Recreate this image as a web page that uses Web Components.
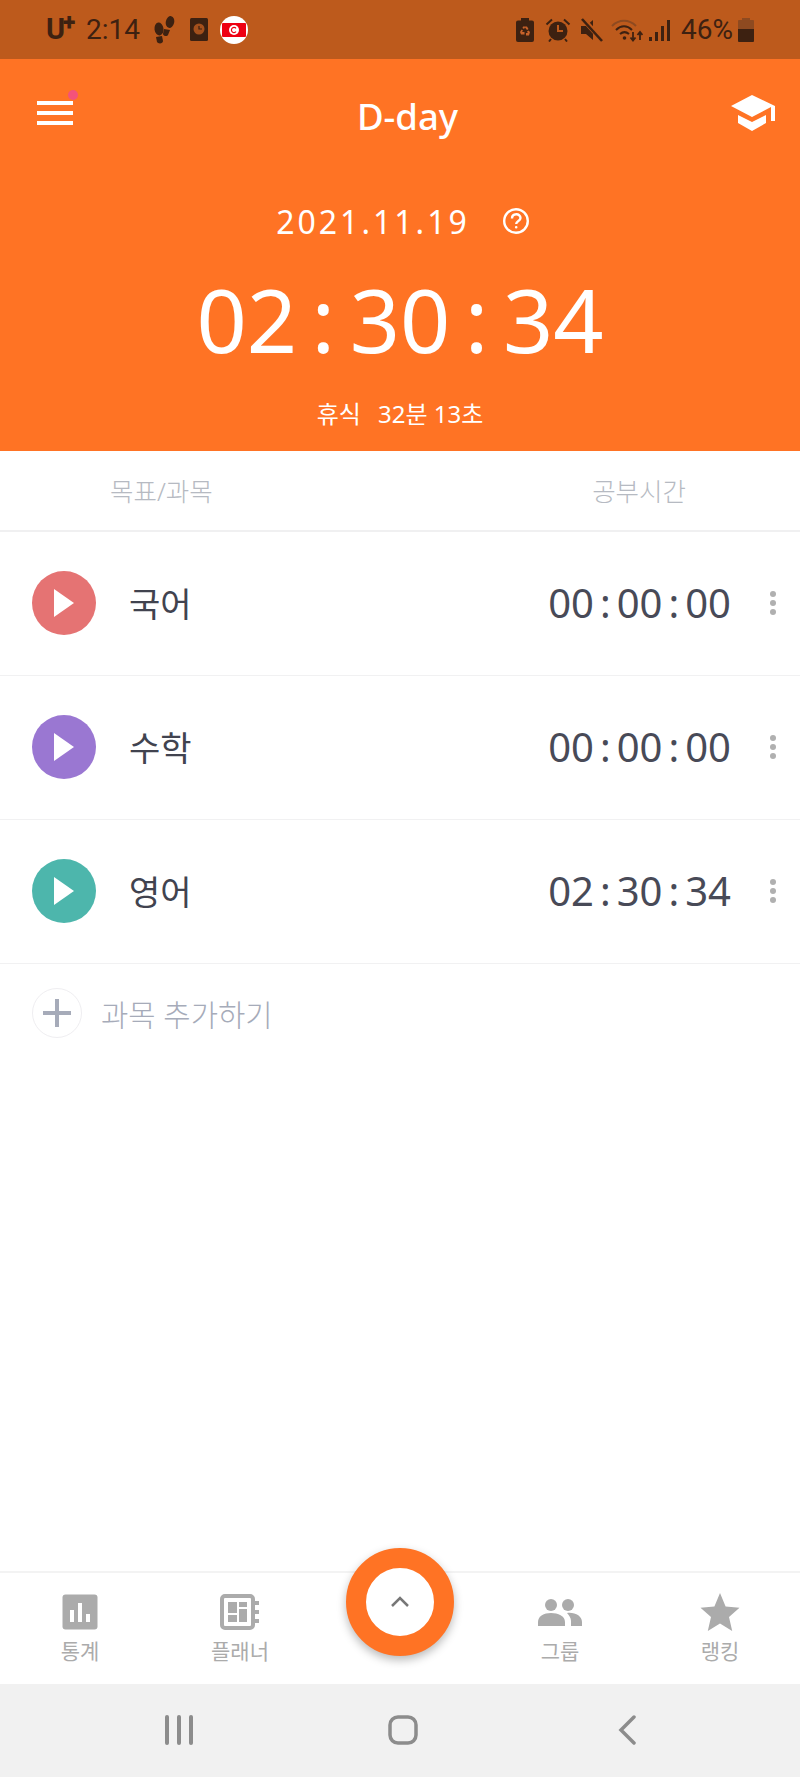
<!DOCTYPE html>
<html>
  <head>
    <meta charset="utf-8" />
    <title>D-day</title>
    <style>
      html, body { margin: 0; padding: 0; background: #fff; }
      body { width: 800px; height: 1777px; display: flex; flex-direction: column; font-family: "Noto Sans", "Noto Sans CJK KR", sans-serif; }
      subject-list { flex: 1; }
      .c { margin: 0 6px; }
    </style>
  </head>
  <body>
    <status-bar></status-bar>
    <timer-header></timer-header>
    <list-head></list-head>
    <subject-list>
      <subject-row color="#e57373">
        <span slot="name">국어</span>
        <span slot="time">00<span class="c">:</span>00<span class="c">:</span>00</span>
      </subject-row>
      <subject-row color="#9a77d2">
        <span slot="name">수학</span>
        <span slot="time">00<span class="c">:</span>00<span class="c">:</span>00</span>
      </subject-row>
      <subject-row color="#4db6ac">
        <span slot="name">영어</span>
        <span slot="time">02<span class="c">:</span>30<span class="c">:</span>34</span>
      </subject-row>
      <add-subject>과목 추가하기</add-subject>
    </subject-list>
    <tab-bar>
      <tab-item label="통계">
        <svg width="36" height="36" viewBox="0 0 36 36"><rect width="35" height="35" x="0.5" y="0.5" rx="3" fill="#ababab"/><rect x="8" y="16" width="4" height="12" fill="#fff"/><rect x="16" y="9" width="4" height="19" fill="#fff"/><rect x="24" y="20" width="4" height="8" fill="#fff"/></svg>
      </tab-item>
      <tab-item label="플래너">
        <svg width="40" height="36" viewBox="0 0 40 36"><rect x="2" y="2" width="31" height="32" rx="3" fill="none" stroke="#ababab" stroke-width="4"/><rect x="8" y="8" width="9" height="11" fill="#ababab"/><rect x="19" y="8" width="8" height="5" fill="#ababab"/><rect x="19" y="15" width="8" height="13" fill="#ababab"/><rect x="8" y="21" width="9" height="7" fill="#ababab"/><rect x="34" y="7" width="5" height="4" fill="#ababab"/><rect x="34" y="16" width="5" height="4" fill="#ababab"/><rect x="34" y="25" width="5" height="4" fill="#ababab"/></svg>
      </tab-item>
      <span></span>
      <tab-item label="그룹">
        <svg width="44" height="36" viewBox="0 0 44 36"><circle cx="13" cy="11" r="6" fill="#ababab"/><circle cx="30" cy="11" r="6" fill="#ababab"/><path d="M0 32v-4c0-6 6-9 13-9s14 3 14 9v4z" fill="#ababab"/><path d="M29 19c8-1 15 3 15 9v4H33v-5c0-3-2-6-4-8z" fill="#ababab"/></svg>
      </tab-item>
      <tab-item label="랭킹">
        <svg width="40" height="38" viewBox="0 0 40 38"><path d="M20 0l5.6 13.6L39.500 14.700 29 24l3.200 14L20 30.500 7.800 38 11 24 .5 14.700l13.900-1.100z" fill="#ababab"/></svg>
      </tab-item>
    </tab-bar>
    <nav-bar></nav-bar>

    <script type="text/javascript">
      // small helper so each element only has to hand over its html
      class ShadowBase extends HTMLElement {
        constructor() {
          super();
          this.attachShadow({ mode: "open" });
          const template = document.createElement("template");
          template.innerHTML = this.markup();
          this.shadowRoot.appendChild(template.content.cloneNode(true));
        }
      }

      class StatusBar extends ShadowBase {
        markup() {
          return `
          <style>
            :host { display: flex; height: 59px; background: #bd5a1c; color: #3d2111; align-items: center; padding: 0 46px; box-sizing: border-box; font-family: Roboto, sans-serif; font-size: 28px; line-height: 59px; }
            svg { display: block; flex: none; }
            .carrier { font-weight: 700; position: relative; font-size: 29px; width: 30px; }
            .carrier b { position: absolute; left: 17px; top: 0; font-size: 23px; line-height: 46px; }
            .clock { margin-left: 10px; }
            .left, .right { display: flex; align-items: center; height: 59px; }
            .right { margin-left: auto; }
          </style>
          <div class="left">
            <span class="carrier">U<b>+</b></span>
            <span class="clock">2:14</span>
            <svg style="margin-left:13px" width="22" height="28" viewBox="0 0 22 28" fill="#3d2111"><ellipse cx="6" cy="13" rx="4.500" ry="6.500" transform="rotate(-8 6 13)"/><path d="M3 21l6-1 1 5c0 3-5 3-6 1z"/><ellipse cx="17" cy="6" rx="4.200" ry="6" transform="rotate(12 17 6)"/><path d="M11 13l6 1-2 5c-1 2-5 1-5-1z"/></svg>
            <svg style="margin-left:15px" width="18" height="23" viewBox="0 0 18 23"><rect width="18" height="23" rx="1.500" fill="#3d2111"/><circle cx="9" cy="11" r="5.500" fill="#a5501c"/><path d="M9 8v3h3" fill="none" stroke="#3d2111" stroke-width="1.200"/></svg>
            <svg style="margin-left:12px" width="28" height="28" viewBox="0 0 28 28"><circle cx="14" cy="14" r="14" fill="#fff"/><rect x="2" y="7" width="24" height="14" rx="1" fill="#ee0012"/><circle cx="14" cy="14" r="5" fill="#fff"/><path d="M16 12.300a2.600 2.600 0 1 0 0 3.400" fill="none" stroke="#ee0012" stroke-width="1.200"/></svg>
          </div>
          <div class="right">
            <svg width="18" height="24" viewBox="0 0 18 24"><path d="M5 0h8v2.500h3a2 2 0 0 1 2 2V22a2 2 0 0 1-2 2H2a2 2 0 0 1-2-2V4.500a2 2 0 0 1 2-2h3z" fill="#3d2111"/><path d="M7 8.500h4l1.500 2.500-1.500 1-2-2.500-1 1.500-1.500-1zM4 14l1.500-2.500 1.500 1-1 1.500h2.500v2.500H5zM14 14l-1.500-1.500-1.500 1 .8 1.500H10v2.500h3z" fill="#c7622a"/></svg>
            <svg style="margin-left:11px" width="26" height="24" viewBox="0 0 26 24"><circle cx="13" cy="13" r="9.500" fill="#3d2111"/><path d="M13 7v6h5" fill="none" stroke="#bd5a1c" stroke-width="2"/><path d="M1.500 6.500L7 1.500M24.500 6.500L19 1.500M6 21l-2 2.500M20 21l2 2.500" stroke="#3d2111" stroke-width="2" fill="none"/></svg>
            <svg style="margin-left:9px" width="24" height="24" viewBox="0 0 24 24"><path d="M1 8h5l7-6v20l-7-6H1z" fill="#3d2111"/><path d="M3 1l19 21" stroke="#bd5a1c" stroke-width="5"/><path d="M2 1l20 22" stroke="#3d2111" stroke-width="2.600"/></svg>
            <svg style="margin-left:7px" width="32" height="24" viewBox="0 0 32 24" fill="none"><path d="M1 8c7-7 17-7 24 0" stroke="#8e4a20" stroke-width="2"/><path d="M5 12c5-5 11-5 16 0" stroke="#3d2111" stroke-width="2"/><path d="M9 16c3-2.500 6-2.500 9 0" stroke="#3d2111" stroke-width="2"/><circle cx="13.500" cy="20" r="1.800" fill="#3d2111"/><path d="M22 14v8M19.500 19.500l2.500 3 2.500-3M29 22v-8M26.500 17l2.500-3 2.500 3" stroke="#3d2111" stroke-width="1.800"/></svg>
            <svg style="margin-left:6px" width="22" height="24" viewBox="0 0 22 24" fill="#3d2111"><rect x="0" y="19" width="3" height="4"/><rect x="6" y="14" width="3" height="9"/><rect x="12" y="8" width="3" height="15"/><rect x="18" y="2" width="3" height="21"/></svg>
            <span style="margin-left:10px">46%</span>
            <svg style="margin-left:5px" width="16" height="24" viewBox="0 0 16 24"><path d="M4 0h8v2h3a1 1 0 0 1 1 1v8H0V3a1 1 0 0 1 1-1h3z" fill="#8e4a20"/><path d="M0 11h16v12a1 1 0 0 1-1 1H1a1 1 0 0 1-1-1z" fill="#3d2111"/></svg>
          </div>
          `;
        }
      }

      class TimerHeader extends ShadowBase {
        markup() {
          return `
          <style>
            :host { display: block; height: 392px; background: #ff7324; color: #fff; box-sizing: border-box; padding: 32px 25px 0 37px; }
            .top { display: grid; grid-template-columns: 1fr auto 1fr; align-items: center; height: 50px; }
            .menu { position: relative; width: 36px; height: 24px; margin-top: -6px; display: flex; flex-direction: column; justify-content: space-between; }
            .menu i { display: block; height: 4px; background: #fff; }
            .menu b { position: absolute; left: 31px; top: -11px; width: 10px; height: 10px; border-radius: 50%; background: #f4527a; }
            .title { font-size: 36.500px; font-weight: 500; line-height: 50px; margin-left: 3px; }
            .cap { justify-self: end; display: block; margin-top: -6px; }
            .hero { margin: 0 -25px 0 -37px; display: flex; flex-direction: column; align-items: center; }
            .date { display: flex; align-items: center; margin-top: 60px; height: 40px; font-size: 32px; letter-spacing: 3px; margin-left: 5px; }
            .date svg { margin-left: 33px; }
            .clock { margin-top: 18px; height: 120px; line-height: 120px; font-size: 88px; }
            .clock span { margin: 0 14.500px; }
            .rest { margin-top: 17px; font-size: 24px; line-height: 36px; }
            .rest em { font-style: normal; margin-right: 11px; }
          </style>
          <div class="top">
            <div class="menu"><i></i><i></i><i></i><b></b></div>
            <div class="title">D-day</div>
            <svg class="cap" width="44" height="36" viewBox="0 0 44 36" fill="#fff"><path d="M21 0L0 11l21 11 19-10v14h4V11z"/><path d="M7 20v8l14 8 14-8v-8l-14 7z"/></svg>
          </div>
          <div class="hero">
            <div class="date">2021.11.19<svg width="26" height="26" viewBox="0 0 26 26" fill="none" stroke="#fff" stroke-width="2.400"><circle cx="13" cy="13" r="11.800"/><path d="M9 10.500c0-5.500 8.500-5.500 8.500-.5 0 3-4.300 3-4.300 6"/><circle cx="13.200" cy="19.300" r=".6" fill="#fff" stroke-width="1.400"/></svg></div>
            <div class="clock">02<span>:</span>30<span>:</span>34</div>
            <div class="rest"><em>휴식</em> 32분 13초</div>
          </div>
          `;
        }
      }

      class ListHead extends ShadowBase {
        markup() {
          return `
          <style>
            :host { display: flex; height: 81px; box-sizing: border-box; border-bottom: 2px solid #f0f0f1; background: #fff; color: #b6bac2; font-size: 25.500px; font-weight: 300; align-items: center; }
            span { margin-top: -2px; }
            .a { margin-left: 110px; }
            .b { margin-left: auto; margin-right: 114px; }
          </style>
          <span class="a">목표/과목</span>
          <span class="b">공부시간</span>
          `;
        }
      }

      class SubjectRow extends ShadowBase {
        markup() {
          return `
          <style>
            :host { display: flex; align-items: center; height: 144px; box-sizing: border-box; border-bottom: 1px solid #f1f1f2; padding-left: 32px; color: #41434f; }
            .play { width: 64px; height: 64px; border-radius: 50%; display: flex; align-items: center; justify-content: center; background: var(--dot); flex: none; margin-top: -1px; }
            .name { margin-left: 33px; font-size: 34px; margin-top: -2px; }
            .time { margin-left: auto; font-size: 40px; color: #484a57; margin-top: -2px; }
            .more { margin: -1px 24px 0 39px; display: flex; flex-direction: column; gap: 3px; }
            .more i { width: 6px; height: 6px; border-radius: 50%; background: #b0b0b0; display: block; }
          </style>
          <div class="play"><svg width="20" height="28" viewBox="0 0 20 28"><path d="M0 0l20 14L0 28z" fill="#fff"/></svg></div>
          <div class="name"><slot name="name"></slot></div>
          <div class="time"><slot name="time"></slot></div>
          <div class="more"><i></i><i></i><i></i></div>
          `;
        }
        connectedCallback() {
          this.style.setProperty("--dot", this.getAttribute("color"));
        }
      }

      class AddSubject extends ShadowBase {
        markup() {
          return `
          <style>
            :host { display: flex; align-items: center; height: 98px; padding-left: 32px; color: #a6abb9; font-size: 29.700px; font-weight: 300; }
            .circle { width: 50px; height: 50px; box-sizing: border-box; border: 1.500px solid #efeef1; border-radius: 50%; display: flex; align-items: center; justify-content: center; margin-right: 19px; }
          </style>
          <div class="circle"><svg width="28" height="28" viewBox="0 0 28 28"><path d="M14 0v28M0 14h28" stroke="#a6abb9" stroke-width="4"/></svg></div>
          <slot></slot>
          `;
        }
      }

      class TabBar extends ShadowBase {
        markup() {
          return `
          <style>
            :host { display: grid; grid-template-columns: repeat(5, 1fr); position: relative; height: 113px; box-sizing: border-box; border-top: 2px solid #f3f3f3; background: #fff; }
            .fab { position: absolute; left: 346px; top: -25px; width: 108px; height: 108px; box-sizing: border-box; border: 20px solid #ff7324; border-radius: 50%; background: #fff; box-shadow: 0 4px 10px rgba(0,0,0,.28); display: flex; align-items: center; justify-content: center; }
          </style>
          <slot></slot>
          <div class="fab"><svg width="20" height="12" viewBox="0 0 20 12"><path d="M2 10l8-8 8 8" fill="none" stroke="#777" stroke-width="2.500"/></svg></div>
          `;
        }
      }

      class TabItem extends ShadowBase {
        markup() {
          return `
          <style>
            :host { display: flex; flex-direction: column; align-items: center; color: #ababab; font-size: 21px; }
            .icon { height: 40px; margin-top: 19px; display: flex; align-items: center; }
            .label { margin-top: 3px; line-height: 32px; }
          </style>
          <div class="icon"><slot></slot></div>
          <div class="label" id="label"></div>
          `;
        }
        connectedCallback() {
          this.shadowRoot.getElementById("label").innerText = this.getAttribute("label");
        }
      }

      class NavBar extends ShadowBase {
        markup() {
          return `
          <style>
            :host { display: grid; grid-template-columns: repeat(3, 224px); padding-left: 67px; height: 93px; background: #f1f1f1; }
            div { display: flex; align-items: center; justify-content: center; padding-bottom: 1px; }
          </style>
          <div><svg width="28" height="30" viewBox="0 0 28 30" fill="#8c8c8c"><rect x="0" y="0" width="4" height="30" rx="2"/><rect x="12" y="0" width="4" height="30" rx="2"/><rect x="24" y="0" width="4" height="30" rx="2"/></svg></div>
          <div><svg width="30" height="30" viewBox="0 0 30 30"><rect x="2" y="2" width="26" height="26" rx="8" fill="none" stroke="#8c8c8c" stroke-width="3.500"/></svg></div>
          <div><svg width="18" height="30" viewBox="0 0 18 30"><path d="M16 2L3 15l13 13" fill="none" stroke="#8c8c8c" stroke-width="3.500" stroke-linecap="round"/></svg></div>
          `;
        }
      }

      window.customElements.define("status-bar", StatusBar);
      window.customElements.define("timer-header", TimerHeader);
      window.customElements.define("list-head", ListHead);
      window.customElements.define("subject-row", SubjectRow);
      window.customElements.define("add-subject", AddSubject);
      window.customElements.define("tab-bar", TabBar);
      window.customElements.define("tab-item", TabItem);
      window.customElements.define("nav-bar", NavBar);
    </script>
  </body>
</html>
